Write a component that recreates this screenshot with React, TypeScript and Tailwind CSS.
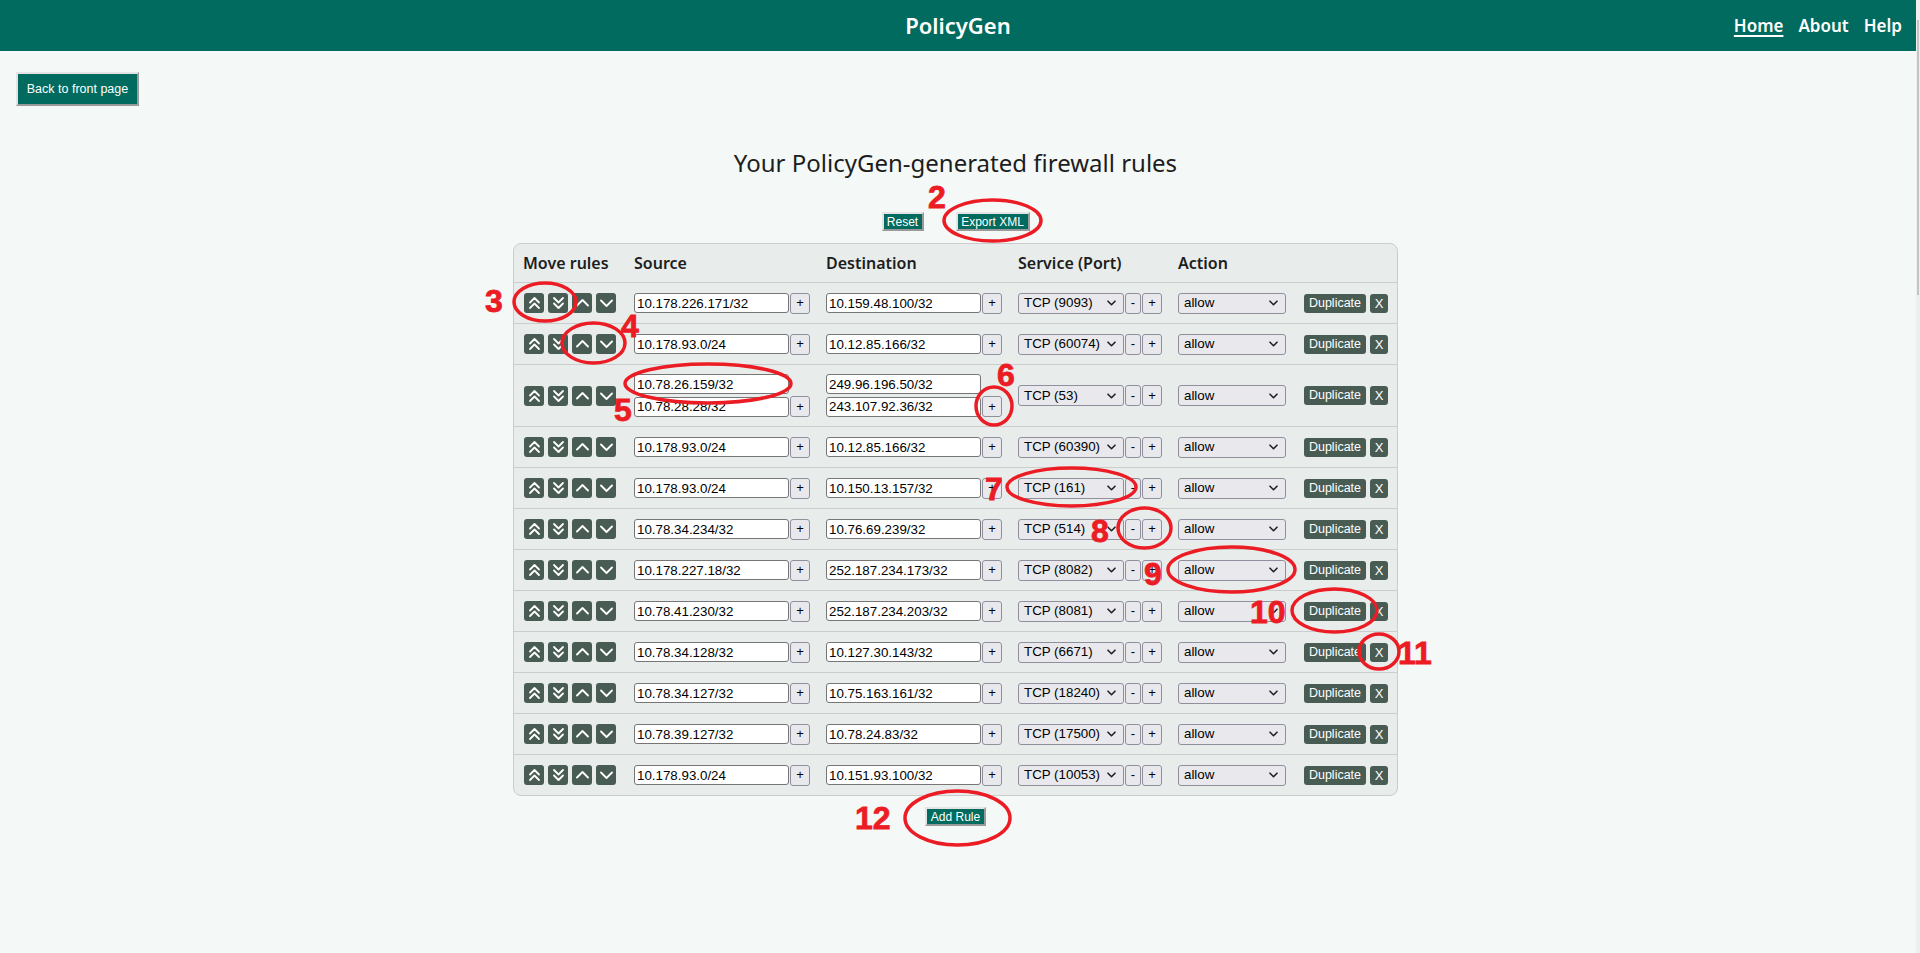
import React from 'react';

// Firewall rule editor page, with the red review annotations drawn over it.

type Rule = { src: string[]; dst: string[]; port: string };

const rules: Rule[] = [
  { src: ['10.178.226.171/32'], dst: ['10.159.48.100/32'], port: '9093' },
  { src: ['10.178.93.0/24'], dst: ['10.12.85.166/32'], port: '60074' },
  { src: ['10.78.26.159/32', '10.78.28.28/32'], dst: ['249.96.196.50/32', '243.107.92.36/32'], port: '53' },
  { src: ['10.178.93.0/24'], dst: ['10.12.85.166/32'], port: '60390' },
  { src: ['10.178.93.0/24'], dst: ['10.150.13.157/32'], port: '161' },
  { src: ['10.78.34.234/32'], dst: ['10.76.69.239/32'], port: '514' },
  { src: ['10.178.227.18/32'], dst: ['252.187.234.173/32'], port: '8082' },
  { src: ['10.78.41.230/32'], dst: ['252.187.234.203/32'], port: '8081' },
  { src: ['10.78.34.128/32'], dst: ['10.127.30.143/32'], port: '6671' },
  { src: ['10.78.34.127/32'], dst: ['10.75.163.161/32'], port: '18240' },
  { src: ['10.78.39.127/32'], dst: ['10.78.24.83/32'], port: '17500' },
  { src: ['10.178.93.0/24'], dst: ['10.151.93.100/32'], port: '10053' },
];

const ellipses = [
  { cx: 992.5, cy: 220.5, rx: 48.5, ry: 20.5 },
  { cx: 545, cy: 302, rx: 31, ry: 19 },
  { cx: 593.5, cy: 343, rx: 31.5, ry: 20 },
  { cx: 708, cy: 383.5, rx: 83, ry: 19.5 },
  { cx: 994, cy: 406, rx: 18, ry: 19 },
  { cx: 1071.5, cy: 487, rx: 64.5, ry: 19 },
  { cx: 1144.5, cy: 528, rx: 26.5, ry: 20 },
  { cx: 1231.5, cy: 569.5, rx: 63.5, ry: 22.5 },
  { cx: 1334.5, cy: 610.5, rx: 42.5, ry: 21.5 },
  { cx: 1379, cy: 651.5, rx: 20, ry: 17.5 },
  { cx: 957.5, cy: 818, rx: 52.5, ry: 27 },
];

const labels = [
  { t: '2', x: 928, y: 208 },
  { t: '3', x: 485, y: 312 },
  { t: '4', x: 621, y: 337 },
  { t: '5', x: 614, y: 421 },
  { t: '6', x: 997, y: 386 },
  { t: '7', x: 985, y: 500 },
  { t: '8', x: 1091, y: 542 },
  { t: '9', x: 1144, y: 585 },
  { t: '10', x: 1250, y: 623 },
  { t: '11', x: 1398, y: 664 },
  { t: '12', x: 855, y: 829 },
];

const mono = "font-['Liberation_Sans',Arial,sans-serif]";
const tealBtn =
  "bg-[#006b5e] text-white border-2 border-t-[#e4e4e4] border-l-[#e4e4e4] border-b-[#9a9a9a] border-r-[#9a9a9a] font-['Liberation_Sans',Arial,sans-serif]";

function MoveBtn({ d }: { d: string }) {
  return (
    <button type="button" className="flex h-[20px] w-[20px] items-center justify-center rounded-[3px] bg-[#485c54]">
      <svg width="13" height="14" viewBox="0 0 13 14" fill="none" stroke="white" strokeWidth="1.8" strokeLinecap="round" strokeLinejoin="round">
        <path d={d} />
      </svg>
    </button>
  );
}

function Chevron() {
  return (
    <svg width="9" height="6" viewBox="0 0 9 6" fill="none" stroke="#222" strokeWidth="1.6" strokeLinecap="round" strokeLinejoin="round">
      <path d="M1 1.2 4.5 4.7 8 1.2" />
    </svg>
  );
}

function SmallBtn({ label, w }: { label: string; w: string }) {
  return (
    <button type="button" className={`flex h-[21px] ${w} items-center justify-center rounded-[3px] border border-[#8f8f9d] bg-[#e9e9ed] text-[13px] text-black ${mono}`}>
      {label}
    </button>
  );
}

function Field({ value }: { value: string }) {
  return (
    <input
      readOnly
      value={value}
      className={`h-[20px] w-[155px] rounded-[3px] border border-[#767676] bg-white pl-[2px] text-[13.33px] text-black outline-none ${mono}`}
    />
  );
}

function AddrStack({ items }: { items: string[] }) {
  return (
    <div className="flex flex-col gap-[2px]">
      {items.map((v, i) => (
        <div key={i} className="flex items-center gap-[1px]">
          <Field value={v} />
          {i === items.length - 1 && <SmallBtn label="+" w="w-[20px]" />}
        </div>
      ))}
    </div>
  );
}

function Select({ label, w }: { label: string; w: string }) {
  return (
    <div className={`flex h-[21px] ${w} items-center justify-between rounded-[3px] border border-[#8f8f9d] bg-[#e9e9ed] pl-[5px] pr-[7px] text-[13.33px] text-black ${mono}`}>
      <span>{label}</span>
      <Chevron />
    </div>
  );
}

const cols = 'grid grid-cols-[94px_176px_176px_144px_110px_84px] gap-x-4 pl-[10px] pr-[9px]';

export default function App() {
  return (
    <div className="relative flex min-h-[953px] bg-[#f4f9f7] font-['Noto_Sans',sans-serif] text-[#1d1d1d]">
      <div className="flex-1">
        <header className="grid h-[51px] grid-cols-[1fr_auto_1fr] items-center bg-[#006b5e] text-white">
          <div />
          <div className="text-[22px] font-semibold">PolicyGen</div>
          <nav className="flex justify-end gap-[15px] pr-[14px] text-[17px] font-semibold">
            <a className="underline decoration-2 underline-offset-[3px]">Home</a>
            <a>About</a>
            <a>Help</a>
          </nav>
        </header>

        <div className="pl-[16px] pt-[21px]">
          <button type="button" className={`h-[34px] w-[123px] text-[12.5px] ${tealBtn}`}>
            Back to front page
          </button>
        </div>

        <main className="flex flex-col items-center pr-[5px]">
          <h1 className="mt-[41px] text-[24px] leading-[32px]">Your PolicyGen-generated firewall rules</h1>

          <div className="mt-[33px] flex gap-[32px]">
            <button type="button" className={`h-[19px] w-[42px] text-[12px] leading-none ${tealBtn}`}>
              Reset
            </button>
            <button type="button" className={`h-[19px] w-[74px] text-[12px] leading-none ${tealBtn}`}>
              Export XML
            </button>
          </div>

          <div className="mt-[12px] w-[885px] rounded-[8px] border border-[#c9cecc] bg-[#e8edeb]">
            <div className={`${cols} h-[38px] items-center text-[16px] font-semibold`}>
              <div className="-ml-[1px]">Move rules</div>
              <div>Source</div>
              <div>Destination</div>
              <div>Service (Port)</div>
              <div>Action</div>
              <div />
            </div>
            {rules.map((r, i) => (
              <div key={i} className={`${cols} min-h-[41px] items-center border-t border-[#c9cecc] py-[9px]`}>
                <div className="flex gap-[4px]">
                  <MoveBtn d="M2 6.5 6.5 2 11 6.5M2 12 6.5 7.5 11 12" />
                  <MoveBtn d="M2 2 6.5 6.5 11 2M2 7.5 6.5 12 11 7.5" />
                  <MoveBtn d="M1 9.5 6.5 4 12 9.5" />
                  <MoveBtn d="M1 4.5 6.5 10 12 4.5" />
                </div>
                <AddrStack items={r.src} />
                <AddrStack items={r.dst} />
                <div className="flex items-center gap-[1px]">
                  <Select label={`TCP (${r.port})`} w="w-[106px]" />
                  <SmallBtn label="-" w="w-[16px]" />
                  <SmallBtn label="+" w="w-[20px]" />
                </div>
                <Select label="allow" w="w-[108px]" />
                <div className="flex items-center gap-[4px]">
                  <button type="button" className={`h-[19px] w-[62px] rounded-[3px] bg-[#485c54] text-[12.5px] leading-none text-white ${mono}`}>
                    Duplicate
                  </button>
                  <button type="button" className={`h-[19px] w-[18px] rounded-[3px] bg-[#485c54] text-[13px] leading-none text-white ${mono}`}>
                    X
                  </button>
                </div>
              </div>
            ))}
          </div>

          <button type="button" className={`mt-[11px] h-[19px] w-[61px] text-[12px] leading-none ${tealBtn}`}>
            Add Rule
          </button>
        </main>
      </div>

      <aside className="w-[4px] bg-[#eef0ef] pt-[20px]">
        <div className="ml-[1px] h-[275px] w-[2px] bg-[#c4c4c4]" />
      </aside>

      <svg className="pointer-events-none absolute left-0 top-0" width="1920" height="953">
        {ellipses.map((e, i) => (
          <ellipse key={i} cx={e.cx} cy={e.cy} rx={e.rx} ry={e.ry} fill="none" stroke="#ec1c24" strokeWidth="3.5" />
        ))}
        {labels.map((l) => (
          <text
            key={l.t}
            x={l.x}
            y={l.y}
            fill="#ec1c24"
            stroke="#ec1c24"
            strokeWidth="0.8"
            fontSize="32"
            fontWeight="700"
            fontFamily="'Liberation Sans', Arial, sans-serif"
          >
            {l.t}
          </text>
        ))}
      </svg>
    </div>
  );
}
